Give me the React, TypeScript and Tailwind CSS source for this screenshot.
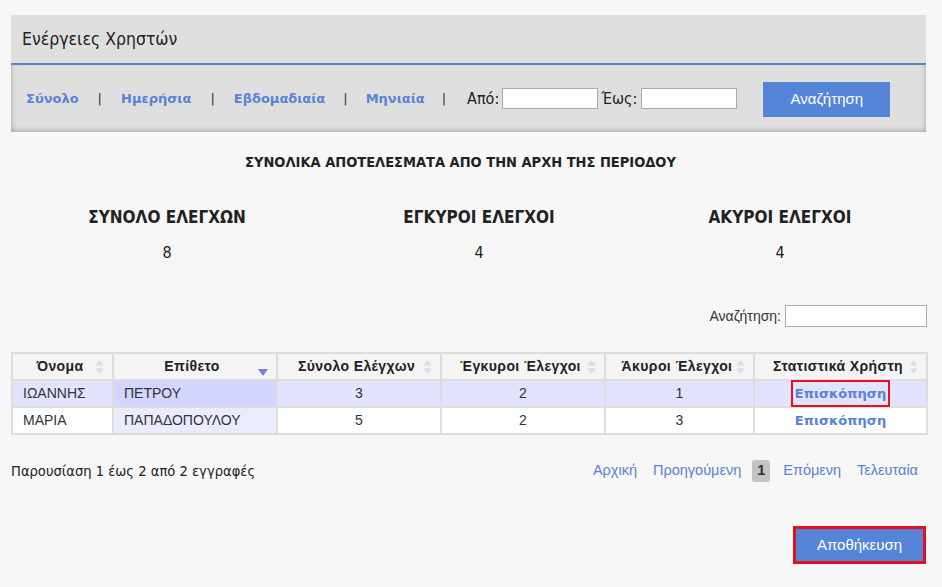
const narrow = "font-['Liberation_Sans_Narrow','Arial_Narrow','DejaVu_Sans_Condensed',sans-serif]";
const arial = "font-['Liberation_Sans',Arial,sans-serif]";
const verdana = "font-['DejaVu_Sans',Verdana,sans-serif]";

interface Row {
  name: string;
  surname: string;
  total: number;
  valid: number;
  invalid: number;
}

const rows: Row[] = [
  { name: 'ΙΩΑΝΝΗΣ', surname: 'ΠΕΤΡΟΥ', total: 3, valid: 2, invalid: 1 },
  { name: 'ΜΑΡΙΑ', surname: 'ΠΑΠΑΔΟΠΟΥΛΟΥ', total: 5, valid: 2, invalid: 3 },
];

const SortBoth = () => (
  <svg width="9" height="16" viewBox="0 0 9 16" className="shrink-0">
    <path d="M4.5 1 L8.5 6.5 L0.5 6.5 Z" fill="#dcdcdc" />
    <path d="M4.5 15 L8.5 9.5 L0.5 9.5 Z" fill="#dcdcdc" />
  </svg>
);

const SortDesc = () => (
  <svg width="10" height="8" viewBox="0 0 10 8" className="shrink-0 mt-[12px]">
    <path d="M0 0 L10 0 L5 7 Z" fill="#7a7fd6" />
  </svg>
);

const Header = ({ label, sort }: { label: string; sort: 'both' | 'desc' }) => (
  <th className="border-2 border-[#dddddd] bg-[#f4f4f4] h-[27px] p-0 font-bold">
    <div className="flex items-center justify-between pl-[12px] pr-[8px]">
      <span className="flex-1 text-center">{label}</span>
      {sort === 'both' ? <SortBoth /> : <SortDesc />}
    </div>
  </th>
);

export default function App() {
  return (
    <div className={`w-[942px] h-[587px] overflow-hidden bg-[#f7f7f7] text-[#222] pt-[15px] ${arial}`}>
      {/* Panel */}
      <div className="ml-[11px] w-[915px] bg-[#e0dfdf]">
        <div className={`h-[48px] flex items-center pl-[11px] text-[17.5px] text-[#222] ${narrow}`}>
          Ενέργειες Χρηστών
        </div>
        <div className="h-[2px] bg-[#5585d9]" />
        <div className="h-[67px] flex items-center pl-[15px] shadow-[inset_0_-4px_5px_-2px_rgba(0,0,0,0.18),inset_4px_0_5px_-3px_rgba(0,0,0,0.15),inset_-4px_0_5px_-3px_rgba(0,0,0,0.15)]">
          <div className={`flex items-center text-[13px] font-bold text-[#5a82d6] ${verdana}`}>
            <span>Σύνολο</span>
            <span className="mx-[19px] text-[#333] font-normal">|</span>
            <span>Ημερήσια</span>
            <span className="mx-[19px] text-[#333] font-normal">|</span>
            <span>Εβδομαδιαία</span>
            <span className="mx-[18px] text-[#333] font-normal">|</span>
            <span>Μηνιαία</span>
            <span className="ml-[17px] mr-[21px] text-[#333] font-normal">|</span>
          </div>
          <span className={`text-[16px] text-[#222] ${narrow}`}>Από:</span>
          <input className="ml-[3px] w-[96px] h-[21px] bg-white border border-[#aaa]" />
          <span className={`ml-[3px] text-[16px] text-[#222] ${narrow}`}>Έως:</span>
          <input className="ml-[4px] w-[96px] h-[21px] bg-white border border-[#aaa]" />
          <button className="ml-[26px] w-[127px] h-[35px] bg-[#5585d9] text-white text-[15px] mt-[1px]">
            Αναζήτηση
          </button>
        </div>
      </div>

      {/* Totals */}
      <div className={`mt-[20px] w-[921px] text-center text-[14.5px] font-bold text-[#222] ${narrow}`}>
        ΣΥΝΟΛΙΚΑ ΑΠΟΤΕΛΕΣΜΑΤΑ ΑΠΟ ΤΗΝ ΑΡΧΗ ΤΗΣ ΠΕΡΙΟΔΟΥ
      </div>
      <div className={`ml-[11px] mt-[31px] grid grid-cols-[312px_312px_290px] text-center text-[#222] ${narrow}`}>
        <div className="text-[17px] font-bold">ΣΥΝΟΛΟ ΕΛΕΓΧΩΝ</div>
        <div className="text-[17px] font-bold">ΕΓΚΥΡΟΙ ΕΛΕΓΧΟΙ</div>
        <div className="text-[17px] font-bold">ΑΚΥΡΟΙ ΕΛΕΓΧΟΙ</div>
        <div className="mt-[11px] text-[16px]">8</div>
        <div className="mt-[11px] text-[16px]">4</div>
        <div className="mt-[11px] text-[16px]">4</div>
      </div>

      {/* Search */}
      <div className="mt-[40px] w-[927px] flex items-center justify-end">
        <span className="text-[14px] text-[#333] mr-[4px]">Αναζήτηση:</span>
        <input className="w-[142px] h-[22px] bg-white border border-[#aaa]" />
      </div>

      {/* Table */}
      <table className="mt-[25px] ml-[11px] w-[915px] border-collapse border-2 border-[#dddddd] table-fixed">
        <colgroup>
          <col className="w-[101px]" />
          <col className="w-[164px]" />
          <col className="w-[164px]" />
          <col className="w-[164px]" />
          <col className="w-[149px]" />
          <col className="w-[173px]" />
        </colgroup>
        <thead className="text-[14px] tracking-[0.4px] text-[#222]">
          <tr>
            <Header label="Όνομα" sort="both" />
            <Header label="Επίθετο" sort="desc" />
            <Header label="Σύνολο Ελέγχων" sort="both" />
            <Header label="Έγκυροι Έλεγχοι" sort="both" />
            <Header label="Άκυροι Έλεγχοι" sort="both" />
            <Header label="Στατιστικά Χρήστη" sort="both" />
          </tr>
        </thead>
        <tbody className="text-[14px] text-[#333]">
          {rows.map((r, i) => {
            const odd = i === 0;
            const base = odd ? 'bg-[#e2e4ff]' : 'bg-white';
            const sorted = odd ? 'bg-[#d3d6ff]' : 'bg-[#eaebff]';
            return (
              <tr key={r.name} className="h-[27px]">
                <td className={`border-2 border-[#dddddd] px-[10px] ${base}`}>{r.name}</td>
                <td className={`border-2 border-[#dddddd] px-[10px] ${sorted}`}>{r.surname}</td>
                <td className={`border-2 border-[#dddddd] text-center ${base}`}>{r.total}</td>
                <td className={`border-2 border-[#dddddd] text-center ${base}`}>{r.valid}</td>
                <td className={`border-2 border-[#dddddd] text-center ${base}`}>{r.invalid}</td>
                <td className={`border-2 border-[#dddddd] text-center p-0 ${base}`}>
                  <span
                    className={`inline-block px-[2px] text-[13px] font-bold text-[#5a82d6] ${verdana} ${
                      odd ? 'outline-2 outline-[#e8101e] leading-[23px]' : ''
                    }`}
                  >
                    Επισκόπηση
                  </span>
                </td>
              </tr>
            );
          })}
        </tbody>
      </table>

      {/* Pagination */}
      <div className="mt-[25px] ml-[11px] w-[907px] flex items-center justify-between">
        <span className={`text-[14.6px] text-[#222] ${narrow}`}>Παρουσίαση 1 έως 2 από 2 εγγραφές</span>
        <div className="flex items-center text-[14.5px] text-[#5a82d6]">
          <span>Αρχική</span>
          <span className="ml-[16px]">Προηγούμενη</span>
          <span className="ml-[11px] w-[18px] h-[22px] flex items-center justify-center rounded-[3px] bg-[#c4c4c4] text-[#333] font-bold">
            1
          </span>
          <span className="ml-[13px]">Επόμενη</span>
          <span className="ml-[16px]">Τελευταία</span>
        </div>
      </div>

      {/* Save */}
      <div className="mt-[44px] w-[926px] flex justify-end">
        <button className="w-[133px] h-[38px] border-[3px] border-[#e8101e] bg-[#5585d9] text-white text-[15px]">
          Αποθήκευση
        </button>
      </div>
    </div>
  );
}
